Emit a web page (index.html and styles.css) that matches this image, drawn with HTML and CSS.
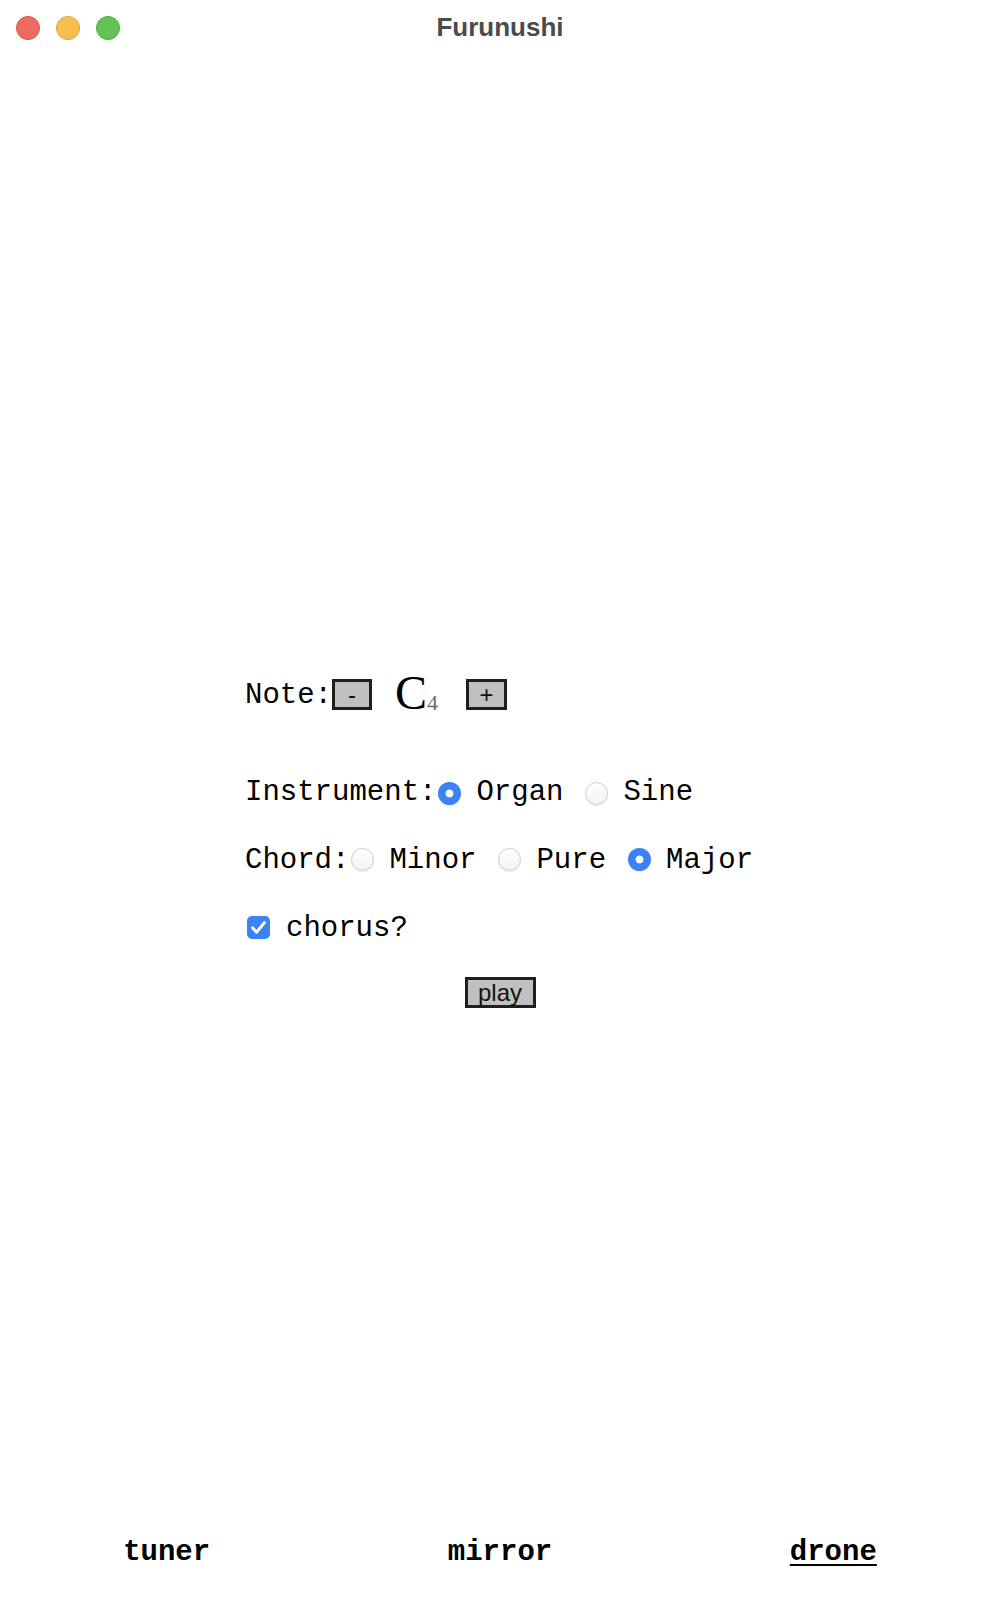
FILE: index.html
```html
<!DOCTYPE html>
<html lang="en">
<head>
<meta charset="utf-8">
<title>Furunushi</title>
<link rel="stylesheet" href="styles.css">
</head>
<body>
<div class="window">
  <header class="titlebar">
    <div class="lights">
      <span class="light red"></span>
      <span class="light yellow"></span>
      <span class="light green"></span>
    </div>
    <div class="title">Furunushi</div>
    <div></div>
  </header>

  <main class="main">
    <div class="form">
      <div class="row note-row">
        <span class="label">Note:</span>
        <button class="btn btn-minus">-</button>
        <span class="note-name">C<span class="octave">4</span></span>
        <button class="btn btn-plus">+</button>
      </div>

      <div class="row instrument-row">
        <span class="label">Instrument:</span>
        <span class="radio checked"></span><span class="opt">Organ</span>
        <span class="radio"></span><span class="opt">Sine</span>
      </div>

      <div class="row chord-row">
        <span class="label">Chord:</span>
        <span class="radio"></span><span class="opt">Minor</span>
        <span class="radio"></span><span class="opt">Pure</span>
        <span class="radio checked"></span><span class="opt">Major</span>
      </div>

      <div class="row chorus-row">
        <span class="checkbox">
          <svg viewBox="0 0 23 23" width="23" height="23"><path d="M5.5 11.8 L9.6 16.2 L17.4 6.6" fill="none" stroke="#fff" stroke-width="3" stroke-linecap="round" stroke-linejoin="round"/></svg>
        </span>
        <span class="opt">chorus?</span>
      </div>

      <div class="play-row">
        <button class="btn btn-play">play</button>
      </div>
    </div>
  </main>

  <nav class="nav">
    <a class="nav-link">tuner</a>
    <a class="nav-link">mirror</a>
    <a class="nav-link active">drone</a>
  </nav>
</div>
</body>
</html>
```

FILE: styles.css
```css
html, body {
  margin: 0;
  padding: 0;
  background: #ffffff;
}

.window {
  width: 1000px;
  height: 1600px;
  display: flex;
  flex-direction: column;
  font-family: "Liberation Mono", "Courier New", monospace;
  color: #000;
}

.titlebar {
  height: 55px;
  display: grid;
  grid-template-columns: 1fr auto 1fr;
  align-items: center;
  background: #ffffff;
}

.lights {
  display: flex;
  gap: 16px;
  padding-left: 16px;
}

.light {
  width: 22px;
  height: 22px;
  border-radius: 50%;
  border: 1px solid transparent;
}
.light.red { background: #ee6a5f; border-color: #d5554b; }
.light.yellow { background: #f5be4f; border-color: #d9a23c; }
.light.green { background: #61c454; border-color: #4fa940; }

.title {
  font-family: "Liberation Sans", Arial, sans-serif;
  font-weight: bold;
  font-size: 26px;
  color: #4b4b4b;
}

.main {
  flex: 1;
  padding-top: 624px;
}

.form {
  width: 510px;
  margin: 0 auto;
  font-size: 29px;
  line-height: 34px;
}

.row {
  display: flex;
  align-items: center;
  height: 34px;
  white-space: nowrap;
}

.note-row { margin-bottom: 63px; }
.instrument-row { margin-bottom: 34px; }
.chord-row { margin-bottom: 34px; }
.chorus-row { margin-bottom: 31px; }

.btn {
  box-sizing: border-box;
  height: 31px;
  background: #c0c0c0;
  border: 3px solid #1f1f1f;
  border-radius: 0;
  font-family: "Liberation Sans", Arial, sans-serif;
  font-size: 24px;
  line-height: 23px;
  color: #111;
  padding: 0;
  margin: 0;
}

.btn-minus { width: 40px; margin-bottom: 4px; }
.btn-plus { width: 41px; margin-left: 28px; margin-bottom: 4px; }
.btn-play { width: 71px; }

.note-name {
  font-family: "Liberation Serif", "Times New Roman", serif;
  font-size: 48px;
  line-height: 48px;
  margin-left: 23px;
  margin-top: 4px;
}

.octave {
  font-size: 22px;
  color: #6a6a6a;
  vertical-align: -1px;
}

.radio {
  box-sizing: border-box;
  width: 23px;
  height: 23px;
  border-radius: 50%;
  border: 1px solid #cdcdcd;
  background: linear-gradient(#ffffff, #f3f3f3);
  box-shadow: 0 1px 1px rgba(0, 0, 0, 0.06);
  margin: -4px 15px 0 2px;
  flex: none;
}

.radio.checked {
  border: none;
  background: radial-gradient(circle, #ffffff 0 3.6px, #3b82f6 4.3px);
}

.instrument-row .radio { margin-top: 0; }

.opt { margin-right: 20px; }

.checkbox {
  width: 23px;
  height: 23px;
  border-radius: 5px;
  background: #3b82f6;
  margin: 0 16px 3px 2px;
  display: flex;
  flex: none;
}

.checkbox svg { display: block; }

.play-row {
  display: flex;
  justify-content: center;
}

.nav {
  display: grid;
  grid-template-columns: 1fr 1fr 1fr;
  margin-bottom: 30px;
  font-size: 29px;
  line-height: 34px;
  font-weight: bold;
  text-align: center;
}

.nav-link {
  color: #000;
  text-decoration: none;
}

.nav-link.active {
  text-decoration: underline;
  text-underline-offset: 4px;
}
```
